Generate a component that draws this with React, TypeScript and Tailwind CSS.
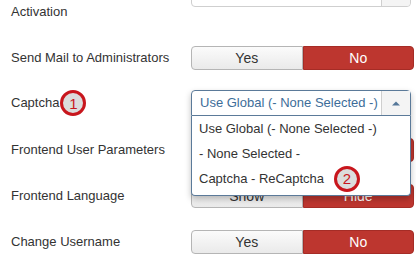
function Marker({ n }: { n: number }) {
    return (
        <span className="inline-flex items-center justify-center w-[26px] h-[26px] rounded-full border-[3px] border-[#c8161d] bg-[#dcdcdc] text-[#c8161d] text-[15px] leading-none shrink-0">
            {n}
        </span>
    );
}

function Toggle({ yes, no }: { yes: string; no: string }) {
    return (
        <div className="flex w-[223px] h-[24px] text-[14px]">
            <div className="flex-1 flex items-center justify-center rounded-l-[4px] border border-[#b5b5b5] bg-gradient-to-b from-[#fbfbfb] to-[#eaeaea] text-[#333]">
                {yes}
            </div>
            <div className="flex-1 flex items-center justify-center rounded-r-[4px] border border-[#a52c26] bg-[#bd362f] text-white">
                {no}
            </div>
        </div>
    );
}

function Label({ children }: { children: React.ReactNode }) {
    return <div className="w-[191px] pl-[11px] shrink-0 text-[13px] text-[#333]">{children}</div>;
}

export default function App() {
    return (
        <div
            className="w-[416px] h-[257px] overflow-hidden bg-white relative"
            style={{ fontFamily: '"Liberation Sans", Arial, sans-serif' }}
        >
            <div className="flex flex-col">
                {/* row 1: mostly scrolled out */}
                <div className="flex items-start h-[66px] -mt-[20px]">
                    <div className="w-[191px] pl-[11px] shrink-0 text-[13px] leading-[18px] pt-[23px] text-[#333]">
                        Activation
                    </div>
                    <div className="flex w-[220px] h-[27px] border border-[#cfcfcf] rounded-[4px] bg-white">
                        <div className="flex-1" />
                        <div className="w-[29px] border-l border-[#cfcfcf] bg-[#f4f4f4] rounded-r-[4px]" />
                    </div>
                </div>

                <div className="flex items-center h-[24px] mb-[22px]">
                    <Label>Send Mail to Administrators</Label>
                    <Toggle yes="Yes" no="No" />
                </div>

                <div className="flex items-start h-[46px] -mt-[2px] mb-[2px] relative z-10">
                    <div className="w-[191px] pl-[11px] shrink-0 text-[13px] text-[#333] flex items-center gap-[1px] h-[26px]">
                        <span>Captcha</span>
                        <Marker n={1} />
                    </div>
                    <div className="w-[220px] flex flex-col shadow-[0_3px_6px_rgba(0,0,0,0.25)] rounded-[4px]">
                        <div className="flex h-[26px] border border-[#5b7a99] rounded-t-[4px] bg-white">
                            <div className="flex-1 flex items-center pl-[8px] text-[13px] text-[#3d6d99]">
                                Use Global (- None Selected -)
                            </div>
                            <div className="w-[29px] flex items-center justify-center border-l border-[#cfcfcf] bg-[#f4f4f4]">
                                <svg width="8" height="5" viewBox="0 0 8 5">
                                    <path d="M0 4.5 L4 0.5 L8 4.5 Z" fill="#557799" />
                                </svg>
                            </div>
                        </div>
                        <div className="flex flex-col border border-t-0 border-[#5b7a99] rounded-b-[4px] bg-white pt-[1px] pb-[4px] text-[13px] text-[#333]">
                            <div className="h-[24px] flex items-center pl-[7px]">Use Global (- None Selected -)</div>
                            <div className="h-[25px] flex items-center pl-[7px]">- None Selected -</div>
                            <div className="h-[25px] flex items-center pl-[7px]">
                                <span>Captcha - ReCaptcha</span>
                                <span className="ml-[10px]"><Marker n={2} /></span>
                            </div>
                        </div>
                    </div>
                </div>

                <div className="flex items-center h-[24px] mb-[22px]">
                    <Label>Frontend User Parameters</Label>
                    <Toggle yes="Show" no="Hide" />
                </div>

                <div className="flex items-center h-[24px] mb-[22px]">
                    <Label>Frontend Language</Label>
                    <Toggle yes="Show" no="Hide" />
                </div>

                <div className="flex items-center h-[24px] mb-[22px]">
                    <Label>Change Username</Label>
                    <Toggle yes="Yes" no="No" />
                </div>
            </div>
        </div>
    );
}
